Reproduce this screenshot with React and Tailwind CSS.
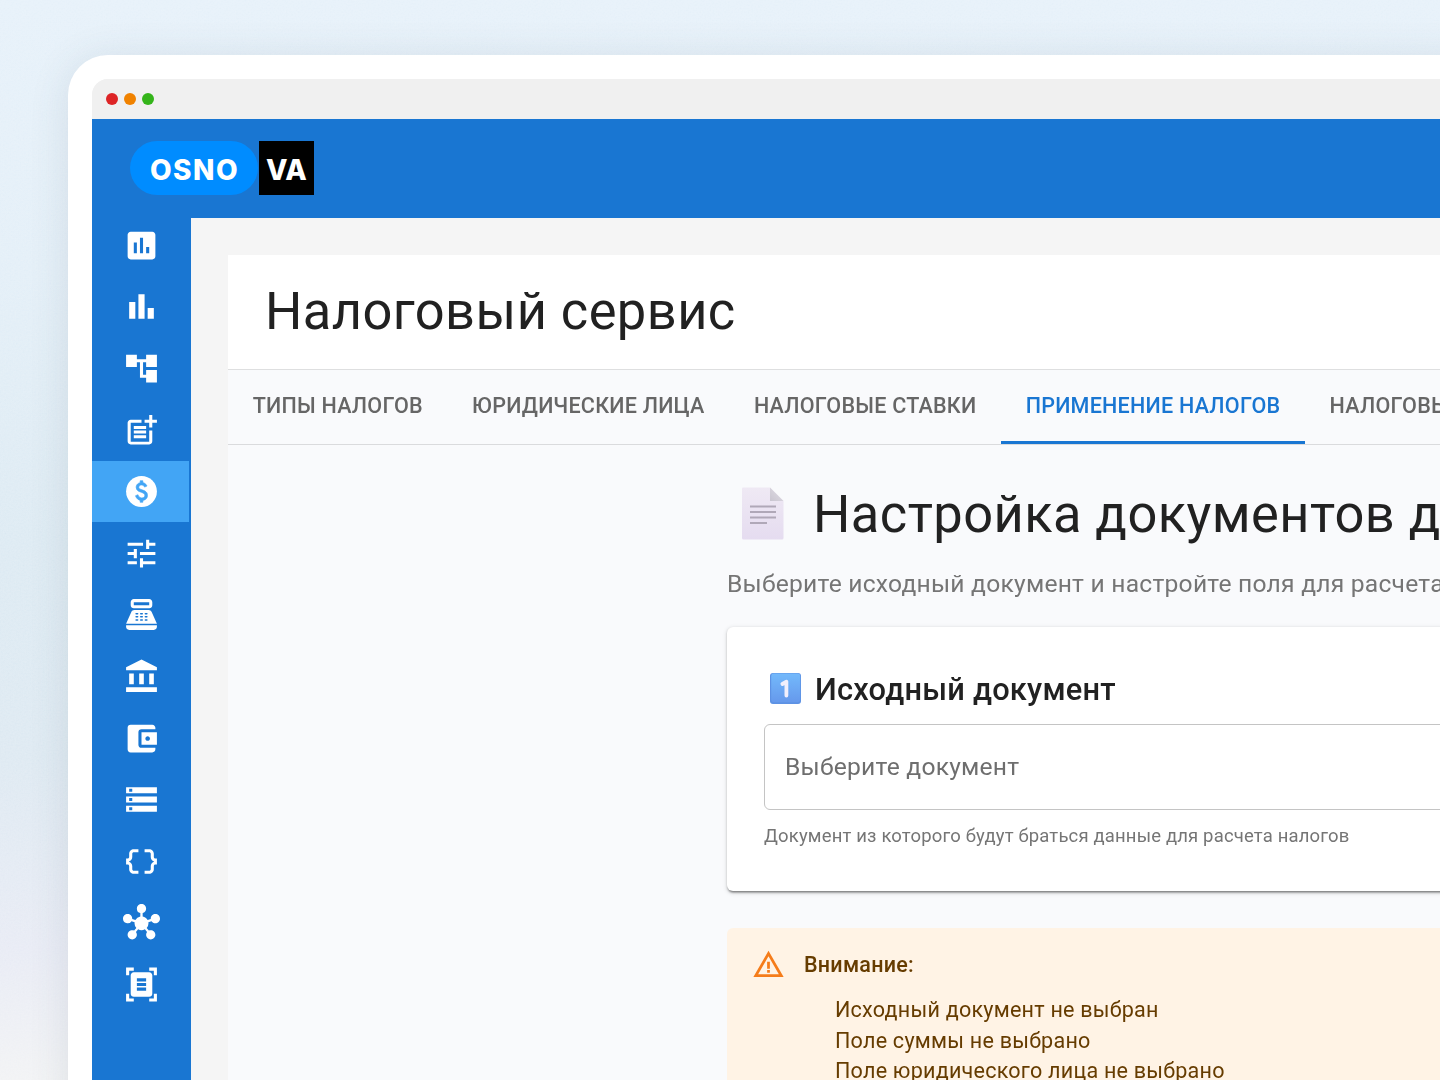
import React, { useState } from "react";
import {
  MdAssessment,
  MdBarChart,
  MdAccountTree,
  MdPostAdd,
  MdTune,
  MdPointOfSale,
  MdAccountBalance,
  MdAccountBalanceWallet,
  MdStorage,
  MdDataObject,
  MdHub,
  MdDocumentScanner,
  MdWarningAmber,
} from "react-icons/md";

const TaxIcon = ({ className }) => (
  <svg className={className} viewBox="0 0 24 24">
    <circle cx="12" cy="12" r="10" fill="currentColor" />
    <path
      className="fill-[#42a5f5] stroke-[#42a5f5]"
      strokeWidth="0.4"
      d="M12.88 17.76V19h-1.75v-1.29c-.74-.18-2.39-.77-3.02-2.96l1.65-.67c.06.22.58 2.09 2.4 2.09.93 0 1.98-.48 1.98-1.61 0-.96-.7-1.46-2.28-2.03-1.1-.39-3.35-1.03-3.35-3.31 0-.1.01-2.4 2.62-2.96V5h1.75v1.24c1.84.32 2.51 1.79 2.66 2.23l-1.58.67c-.11-.35-.59-1.34-1.9-1.34-.7 0-1.81.37-1.81 1.39 0 .95.86 1.31 2.64 1.9 2.4.83 3.01 2.05 3.01 3.45 0 2.63-2.5 3.13-3.02 3.22z"
    />
  </svg>
);

const menu = [
  { id: "reports", Icon: MdAssessment },
  { id: "charts", Icon: MdBarChart },
  { id: "tree", Icon: MdAccountTree },
  { id: "post", Icon: MdPostAdd },
  { id: "taxes", Icon: TaxIcon },
  { id: "settings", Icon: MdTune },
  { id: "cashbox", Icon: MdPointOfSale },
  { id: "bank", Icon: MdAccountBalance },
  { id: "wallet", Icon: MdAccountBalanceWallet },
  { id: "storage", Icon: MdStorage },
  { id: "objects", Icon: MdDataObject },
  { id: "hub", Icon: MdHub },
  { id: "scanner", Icon: MdDocumentScanner },
];

const tabs = [
  "Типы налогов",
  "Юридические лица",
  "Налоговые ставки",
  "Применение налогов",
  "Налоговые периоды",
];

const warnings = [
  "Исходный документ не выбран",
  "Поле суммы не выбрано",
  "Поле юридического лица не выбрано",
];

const Logo = () => (
  <div className="flex items-center text-white font-['Inter',sans-serif] font-extrabold text-[28px] leading-none">
    <div className="w-[128px] h-[54px] rounded-full bg-[#008cff] flex items-center justify-center pt-[3px] pl-px tracking-[1.5px]">
      OSNO
    </div>
    <div className="w-[55px] h-[54px] ml-px bg-black flex items-center justify-center pt-[3px]">VA</div>
  </div>
);

const PageIcon = () => (
  <svg className="shrink-0 mb-[2px]" width="42" height="53" viewBox="0 0 42 53">
    <defs>
      <linearGradient id="sheet" x1="0" y1="0" x2="0" y2="1">
        <stop offset="0" stopColor="#efe9f4" />
        <stop offset="1" stopColor="#e5dcf0" />
      </linearGradient>
      <linearGradient id="fold" x1="0" y1="1" x2="1" y2="0">
        <stop offset="0" stopColor="#c9c5d0" />
        <stop offset="1" stopColor="#e2dfe6" />
      </linearGradient>
    </defs>
    <path d="M1 0.5H28L41.5 14V51a1.5 1.5 0 0 1-1.5 1.5H1.5A1.5 1.5 0 0 1 0 51V1.5a1 1 0 0 1 1-1z" fill="url(#sheet)" />
    <path d="M28 0.5L41.5 14H28z" fill="url(#fold)" />
    <path d="M8 19.5h26M8 25h26M8 30.5h26M8 36h17" stroke="#b0a8b8" strokeWidth="2" />
  </svg>
);

const KeycapOne = () => (
  <svg className="shrink-0" width="31" height="31" viewBox="0 0 31 31">
    <defs>
      <linearGradient id="keycap" x1="0" y1="0" x2="0" y2="1">
        <stop offset="0" stopColor="#73b9fb" />
        <stop offset="1" stopColor="#6699ec" />
      </linearGradient>
    </defs>
    <rect width="31" height="31" rx="3" fill="#5d92e4" />
    <rect x="1.2" y="0.6" width="29" height="28.6" rx="2.4" fill="url(#keycap)" />
    <path d="M12.4 11L16.4 8.7V22.6" fill="none" stroke="#f2effc" strokeWidth="3.8" strokeLinecap="round" strokeLinejoin="round" />
  </svg>
);

// fine paper grain over the backdrop
const Grain = () => (
  <svg className="absolute inset-0 size-full opacity-50 mix-blend-soft-light">
    <filter id="grain">
      <feTurbulence type="fractalNoise" baseFrequency="0.6" numOctaves="2" />
      <feColorMatrix type="saturate" values="0" />
      <feComponentTransfer>
        <feFuncA type="linear" slope="0" intercept="1" />
      </feComponentTransfer>
    </filter>
    <rect width="100%" height="100%" filter="url(#grain)" />
  </svg>
);

const App = () => {
  const [activeMenu, setActiveMenu] = useState("taxes");
  const [activeTab, setActiveTab] = useState(3);

  return (
    <div className="relative w-[1440px] h-[1080px] overflow-hidden pl-[68px] pt-[55px] bg-[linear-gradient(180deg,#e5f0f9_0%,#e2eef7_25%,#dbe9f2_50%,#dce8f1_70%,#e7eaf4_88%,#f1f2f4_100%)] font-['Roboto',sans-serif] text-[#212121]">
      <Grain />
      <div className="relative w-[1500px] h-[1100px] rounded-tl-[40px] bg-white pl-6 pt-6 shadow-[0_4px_40px_rgba(60,80,100,0.12)]">
        <div className="h-full rounded-tl-[16px] overflow-hidden flex flex-col bg-[#f5f5f5]">
          {/* Window bar */}
          <div className="h-10 shrink-0 bg-[#f0f0f0] flex items-center gap-1.5 pl-3.5">
            <span className="size-3 rounded-full bg-[#dd2426]" />
            <span className="size-3 rounded-full bg-[#f08200]" />
            <span className="size-3 rounded-full bg-[#34b41a]" />
          </div>

          {/* Header */}
          <header className="h-[98.5px] shrink-0 bg-[#1976d2] flex items-center pl-[38px]">
            <Logo />
          </header>

          <div className="flex flex-1 min-h-0">
            {/* Sidebar */}
            <nav className="w-[99px] shrink-0 bg-[#1976d2] -mt-[3px] pr-0.5">
              {menu.map(({ id, Icon }) => (
                <button
                  key={id}
                  onClick={() => setActiveMenu(id)}
                  className={`w-full h-[61.6px] flex items-center justify-center pl-0.5 text-white ${
                    activeMenu === id ? "bg-[#42a5f5]" : ""
                  }`}
                >
                  <Icon className="size-[37px]" />
                </button>
              ))}
            </nav>

            <main className="flex-1 min-w-0 pl-[37px] pt-[37px]">
              <div className="h-full bg-[#f9fafc]">
                <div className="h-[115px] bg-white pl-[37px] flex items-center border-b border-[#dedfe0]">
                  <h1 className="text-[52.4px] leading-none tracking-[0.45px]">Налоговый сервис</h1>
                </div>

                {/* Tabs */}
                <div className="flex h-[75px] border-b border-[#dadbdd] whitespace-nowrap">
                  {tabs.map((tab, i) => (
                    <button
                      key={tab}
                      onClick={() => setActiveTab(i)}
                      className={`shrink-0 px-[24.64px] pt-[2px] uppercase font-medium text-[21.56px] tracking-[0.23px] border-b-3 ${
                        activeTab === i ? "text-[#1976d2] border-[#1976d2]" : "text-[#666] border-transparent"
                      }`}
                    >
                      {tab}
                    </button>
                  ))}
                </div>

                <section className="pl-[499px] pt-[37px] whitespace-nowrap">
                  <div className="flex items-center h-[65px] pl-[15px] gap-[29px]">
                    <PageIcon />
                    <h2 className="text-[52.4px] leading-none tracking-[0.45px]">
                      Настройка документов для расчета
                    </h2>
                  </div>
                  <p className="mt-[18px] text-[24.64px] leading-[37px] tracking-[0.23px] text-[#757575]">
                    Выберите исходный документ и настройте поля для расчета налогов
                  </p>

                  {/* Source document */}
                  <div className="mt-[25px] h-[264px] w-[900px] rounded-md bg-white px-[37px] pt-[37px] shadow-[0_3px_2px_-2px_rgba(0,0,0,0.3),0_1.5px_2px_rgba(0,0,0,0.2),0_1.5px_5px_rgba(0,0,0,0.14)]">
                    <div className="flex items-center h-[50px] pl-1.5 gap-[14px]">
                      <KeycapOne />
                      <h3 className="pt-[3px] text-[30.8px] leading-none font-medium tracking-[0.23px]">
                        Исходный документ
                      </h3>
                    </div>
                    <div className="mt-[10px] h-[86px] rounded-md border-[1.5px] border-[#c4c4c4] flex items-center px-5 pt-px text-[24.64px] tracking-[0.23px] text-[#6e6e6e]">
                      Выберите документ
                    </div>
                    <p className="mt-[11px] text-[18.48px] leading-[31px] tracking-[0.17px] text-[#757575]">
                      Документ из которого будут браться данные для расчета налогов
                    </p>
                  </div>

                  {/* Alert */}
                  <div className="mt-[37px] h-[250px] w-[900px] rounded-md bg-[#fff3e5] flex pl-[25px] pt-[20px] text-[21.56px] leading-[30.8px] tracking-[0.23px] text-[#663c00]">
                    <MdWarningAmber className="size-[33px] shrink-0 text-[#f57c1a]" />
                    <div className="pl-[19px] pt-[2px]">
                      <p className="font-medium">Внимание:</p>
                      <ul className="pl-[31px] pt-[14.5px]">
                        {warnings.map((w) => (
                          <li key={w}>{w}</li>
                        ))}
                      </ul>
                    </div>
                  </div>
                </section>
              </div>
            </main>
          </div>
        </div>
      </div>
    </div>
  );
};

export default App;
